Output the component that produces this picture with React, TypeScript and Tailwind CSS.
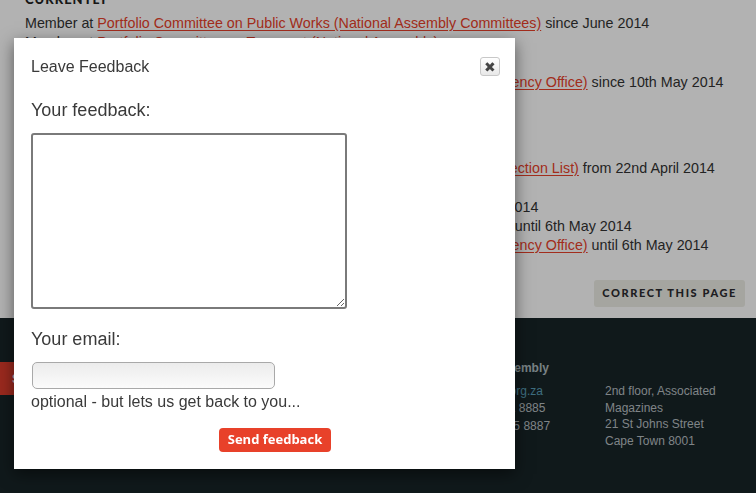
import { useState } from "react"

const sans = "font-['Liberation_Sans',Arial,sans-serif]"
const lato = "font-['Lato','Liberation_Sans',sans-serif]"

function Line({ children, className = "" }: { children: React.ReactNode; className?: string }) {
    return <div className={`h-[19px] leading-[19px] whitespace-nowrap ${className}`}>{children}</div>
}

function A({ children }: { children: React.ReactNode }) {
    return <a href="#" className="text-[#e8412a] underline underline-offset-2">{children}</a>
}

function PersonPage() {
    return (
        <div className={`min-h-screen bg-white text-[14.3px] text-[#333] ${sans}`}>
            <div className="pl-[25px] pr-[11px]">
                <div className={`-mt-[8px] h-[14px] leading-[14px] text-[13px] font-black tracking-[1px] uppercase text-[#222] ${lato}`}>
                    Currently
                </div>
                <Line className="mt-[8px]">
                    Member at <A>Portfolio Committee on Public Works (National Assembly Committees)</A> since June 2014
                </Line>
                <Line>
                    Member at <A>Portfolio Committee on Transport (National Assembly)</A>
                </Line>
                <Line className="mt-[21px]">
                    Constituency Contact: <A>Western Cape: Cape Town Central and Delft (Constituency Office)</A> since 10th May 2014
                </Line>
                <div className={`mt-[35px] h-[14px] leading-[14px] text-[13px] font-black tracking-[1px] uppercase text-[#222] ${lato}`}>
                    Formerly
                </div>
                <Line className="mt-[18px]">
                    Member at <A>National Assembly Candidates: Free State Provincial (National Election List)</A> from 22nd April 2014
                </Line>
                <Line className="mt-[20px]">
                    Member at <A>National Assembly (National Election List)</A> from 2009 till 6th May 2014
                </Line>
                <Line>
                    Member at <A>Portfolio Committee on Water and Sanitation (National Assembly)</A> until 6th May 2014
                </Line>
                <Line>
                    Constituency Contact: <A>Western Cape: Cape Town Central and Delft (Constituency Office)</A> until 6th May 2014
                </Line>
                <div className="mt-[25px] flex justify-end">
                    <button className={`h-[27px] rounded-[3px] bg-[#ededE5] px-[8px] text-[11px] font-black uppercase tracking-[1.6px] text-[#2b2b30] ${lato}`}>
                        Correct this page
                    </button>
                </div>
            </div>

            <footer className="mt-[11px] flex h-[180px] bg-[#182528] pt-[42px] text-[12px] text-[#b7bec1]">
                <div className="w-[442px]">
                    <div className="mt-[2px] flex h-[33px] w-[220px] items-center bg-[#dd3c2b] pl-[12px] font-bold text-white">
                        Subscribe to our newsletter
                    </div>
                </div>
                <div className="w-[163px] leading-[17.5px]">
                    <div className="font-bold text-[#abb9be]">National Assembly</div>
                    <div className="mt-[5px]">
                        <a href="#" className="text-[#599db7]">contact@pa.org.za</a>
                    </div>
                    <div>Tel: (021) 461 8885</div>
                    <div>Fax: (021) 465 8887</div>
                </div>
                <div className="mt-[23px] w-[140px] leading-[16.5px]">
                    <div>2nd floor, Associated Magazines</div>
                    <div>21 St Johns Street</div>
                    <div>Cape Town 8001</div>
                </div>
            </footer>
        </div>
    )
}

function FeedbackModal({ onClose }: { onClose: () => void }) {
    const [feedback, setFeedback] = useState("")
    const [email, setEmail] = useState("")

    return (
        <div className={`fixed left-[14px] top-[38px] z-20 w-[501px] bg-white pb-[17px] pl-[17px] pr-[15px] pt-[19px] text-[#3a3a3a] shadow-[0_5px_15px_rgba(0,0,0,0.5)] ${sans}`}>
            <div className="flex h-[19px] items-center justify-between">
                <span className="text-[16px]">Leave Feedback</span>
                <button
                    onClick={onClose}
                    className="flex h-[19px] w-[20px] items-center justify-center rounded-[3px] border border-[#c8c8c8] bg-gradient-to-b from-white to-[#e8e8e8] text-[14px] leading-none text-[#444]"
                >
                    ✖
                </button>
            </div>

            <form onSubmit={(e) => e.preventDefault()}>
                <label className="mt-[24px] block text-[18px] leading-[21px]">Your feedback:</label>
                <textarea
                    value={feedback}
                    onChange={(e) => setFeedback(e.target.value)}
                    className="mt-[12px] block h-[176px] w-[316px] rounded-[3px] border-2 border-[#7a7a7a] bg-white"
                />

                <label className="mt-[20px] block text-[18px] leading-[21px]">Your email:</label>
                <input
                    type="email"
                    value={email}
                    onChange={(e) => setEmail(e.target.value)}
                    className="ml-[1px] mt-[12px] block h-[27px] w-[243px] rounded-[5px] border border-[#a9a9a9] bg-gradient-to-b from-[#ececec] to-[#fbfbfb]"
                />
                <p className="mt-[4px] text-[16px] leading-[18px]">optional - but lets us get back to you...</p>

                <button
                    type="submit"
                    className="ml-[188px] mt-[17px] h-[24px] w-[112px] rounded-[4px] bg-[#e8412a] text-[13px] font-bold text-white font-['Open_Sans',sans-serif]"
                >
                    Send feedback
                </button>
            </form>
        </div>
    )
}

export default function App() {
    const [open, setOpen] = useState(true)

    return (
        <div className="relative">
            <PersonPage />
            {open && (
                <>
                    <div className="fixed inset-0 z-10 bg-black/30" onClick={() => setOpen(false)} />
                    <FeedbackModal onClose={() => setOpen(false)} />
                </>
            )}
        </div>
    )
}
